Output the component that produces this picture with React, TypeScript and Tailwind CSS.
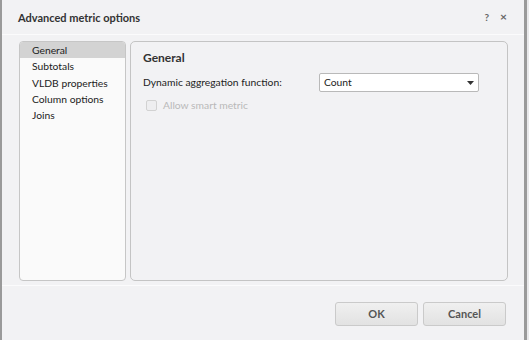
import React from "react";

const items = ["General", "Subtotals", "VLDB properties", "Column options", "Joins"];

function Caret() {
  return (
    <svg width="7" height="4" viewBox="0 0 7 4" className="text-[#333]">
      <path d="M0 0h7L3.5 4z" fill="currentColor" />
    </svg>
  );
}

export default function App() {
  return (
    <div
      className="flex h-[340px] w-[529px] overflow-hidden bg-[#e9e9eb] text-[10.3px] text-[#222]"
      style={{ fontFamily: 'Lato, "Noto Sans", sans-serif' }}
    >
      <div className="w-[2px] shrink-0 bg-[#9a9a9a]" />
      <div className="flex w-[522px] shrink-0 flex-col bg-[#f2f2f4]">
        {/* title bar */}
        <div className="flex h-[35px] items-center justify-between border-b border-[#fbfbfc] pl-[16px] pr-[17px]">
          <span className="pt-[3px] text-[11px] font-bold text-[#333]">Advanced metric options</span>
          <div className="flex items-center gap-[11px] text-[10px] font-bold text-[#666]">
            <span>?</span>
            <span className="text-[12px]">×</span>
          </div>
        </div>

        {/* body */}
        <div className="flex h-[250px] gap-[4px] pl-[17px] pr-[16px] pt-[6px] pb-[4px]">
          <div className="w-[107px] overflow-hidden rounded-[4px] border border-[#c6c6c6] bg-[#fafafa]">
            <ul className="flex flex-col">
              {items.map((it, i) => (
                <li
                  key={it}
                  className={
                    "h-[16.3px] pl-[12px] leading-[16px] " +
                    (i === 0 ? "bg-[#d3d3d3]" : "")
                  }
                >
                  {it}
                </li>
              ))}
            </ul>
          </div>

          <div className="flex-1 rounded-[5px] border border-[#c4c4c4] pl-[12px] pt-[7px]">
            <h2 className="text-[12px] font-bold leading-[18px] text-[#333]">General</h2>
            <div className="mt-[6px] flex items-center">
              <span className="w-[176px]">Dynamic aggregation function:</span>
              <div className="flex h-[19px] w-[160px] items-center justify-between rounded-[2px] border border-[#b9b9b9] bg-white pl-[4px] pr-[4px]">
                <span>Count</span>
                <Caret />
              </div>
            </div>
            <div className="mt-[6px] flex items-center gap-[6px] pl-[3px] text-[#b9b9b9]">
              <span className="h-[11px] w-[11px] rounded-[2px] border border-[#d2d2d2] bg-[#eeeef0]" />
              <span>Allow smart metric</span>
            </div>
          </div>
        </div>

        {/* footer */}
        <div className="flex flex-1 items-start justify-end gap-[5px] border-t border-[#fbfbfc] pr-[18px] pt-[16px]">
          <button className="h-[24px] w-[83px] rounded-[3px] border border-[#cacaca] bg-gradient-to-b from-[#f0f0f0] to-[#e2e2e2] text-[11px] font-bold text-[#555]">
            OK
          </button>
          <button className="h-[24px] w-[83px] rounded-[3px] border border-[#cacaca] bg-gradient-to-b from-[#f0f0f0] to-[#e2e2e2] text-[11px] font-bold text-[#555]">
            Cancel
          </button>
        </div>
      </div>
      <div className="w-[3px] shrink-0 bg-[#9a9a9a]" />
    </div>
  );
}
